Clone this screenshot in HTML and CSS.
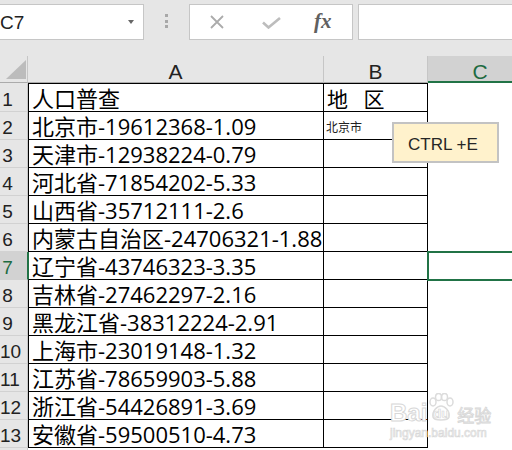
FILE: index.html
```html
<!DOCTYPE html>
<html>
<head>
<meta charset="utf-8">
<link rel="stylesheet" href="styles.css">
</head>
<body>
<div class="app">
  <div class="toolbar">
    <div class="namebox"><span class="ref">C7</span><span class="caret"></span></div>
    <div class="dots"><i></i><i></i><i></i></div>
    <div class="fbtns">
      <svg class="ic-x" width="14" height="14" viewBox="0 0 14 14"><path d="M1 1 L13 13 M13 1 L1 13" stroke="#ababab" stroke-width="1.8" fill="none"/></svg>
      <svg class="ic-ok" width="19" height="12" viewBox="0 0 19 12"><path d="M1 5.5 L6.5 10.5 L18 1" stroke="#bdbdbd" stroke-width="2.6" fill="none"/></svg>
      <span class="fx">fx</span>
    </div>
    <div class="formula"></div>
  </div>
  <div class="sheet">
    <div class="grid">
      <div class="corner"><svg width="21" height="20" viewBox="0 0 21 20"><path d="M20 0 L20 19 L0 19 Z" fill="#bcbcbc"/></svg></div>
      <div class="ch">A</div>
      <div class="ch">B</div>
      <div class="ch chsel">C</div>

      <div class="rh first">1</div><div class="ca first">人口普查</div><div class="cb first"><span class="region">地&nbsp;&nbsp;区</span></div><div class="cc"></div>
      <div class="rh">2</div><div class="ca">北京市-19612368-1.09</div><div class="cb"><span class="small">北京市</span></div><div class="cc"></div>
      <div class="rh">3</div><div class="ca">天津市-12938224-0.79</div><div class="cb"></div><div class="cc"></div>
      <div class="rh">4</div><div class="ca">河北省-71854202-5.33</div><div class="cb"></div><div class="cc"></div>
      <div class="rh">5</div><div class="ca">山西省-35712111-2.6</div><div class="cb"></div><div class="cc"></div>
      <div class="rh">6</div><div class="ca">内蒙古自治区-24706321-1.88</div><div class="cb"></div><div class="cc"></div>
      <div class="rh rsel">7</div><div class="ca asel">辽宁省-43746323-3.35</div><div class="cb"></div><div class="cc"></div>
      <div class="rh">8</div><div class="ca">吉林省-27462297-2.16</div><div class="cb"></div><div class="cc"></div>
      <div class="rh">9</div><div class="ca">黑龙江省-38312224-2.91</div><div class="cb"></div><div class="cc"></div>
      <div class="rh">10</div><div class="ca">上海市-23019148-1.32</div><div class="cb"></div><div class="cc"></div>
      <div class="rh">11</div><div class="ca">江苏省-78659903-5.88</div><div class="cb"></div><div class="cc"></div>
      <div class="rh">12</div><div class="ca">浙江省-54426891-3.69</div><div class="cb"></div><div class="cc"></div>
      <div class="rh">13</div><div class="ca">安徽省-59500510-4.73</div><div class="cb"></div><div class="cc"></div>
      <div class="rh"></div><div class="cx"></div><div class="cx"></div><div class="cc"></div>
    </div>
    <div class="selection"></div>
    <div class="tip">CTRL +E</div>
    <div class="wm">
      <div class="wm-logo">
        <span class="wm-bai">Bai</span>
        <span class="wm-paw">
          <svg width="28" height="30" viewBox="0 0 28 30">
            <g fill="none" stroke="#dcdcdc" stroke-width="1.5">
              <ellipse cx="6" cy="9" rx="3" ry="4"/>
              <ellipse cx="11.5" cy="4" rx="3" ry="3.6"/>
              <ellipse cx="17.5" cy="4" rx="3" ry="3.6"/>
              <ellipse cx="23" cy="9" rx="3" ry="4"/>
              <path d="M6 24 C5 18 10 13 14 13 C18 13 23 18 22 24 C21 28 7 28 6 24 Z"/>
            </g>
          </svg>
          <span class="wm-du">du</span>
        </span>
        <span class="wm-jy">经验</span>
      </div>
      <div class="wm-url">jingyan.baidu.com</div>
    </div>
  </div>
</div>
</body>
</html>
```
FILE: styles.css
```css
* { box-sizing: border-box; margin: 0; padding: 0; }
html, body { width: 512px; height: 450px; overflow: hidden; }
body { background: #e6e6e6; font-family: "Liberation Sans", Arial, sans-serif; color: #222; }
.app { position: relative; width: 512px; height: 450px; overflow: hidden; }

.toolbar { height: 56px; display: flex; align-items: flex-start; padding-top: 4px; }
.namebox { width: 145px; height: 36px; margin-left: -1px; background: #fff; border: 1px solid #c6c6c6; display: flex; align-items: center; justify-content: space-between; padding-right: 9px; }
.ref { font-size: 19px; margin-left: 0; color: #222; line-height: 20px; padding-top: 1px; }
.caret { width: 0; height: 0; border-left: 3.5px solid transparent; border-right: 3.5px solid transparent; border-top: 4px solid #666; margin-top: -1px; }
.dots { width: 45px; display: flex; flex-direction: column; align-items: center; padding-top: 10px; gap: 2.5px; }
.dots i { display: block; width: 3px; height: 3px; background: #a8a8a8; }
.fbtns { width: 164px; height: 36px; background: #fff; border: 1px solid #c6c6c6; display: flex; align-items: center; }
.ic-x { margin-left: 20px; }
.ic-ok { margin-left: 38px; margin-top: 2px; }
.fx { margin-left: 33px; font-family: "Liberation Serif", "Times New Roman", serif; font-style: italic; font-weight: bold; font-size: 21px; color: #606060; line-height: 20px; margin-top: -3px; }
.formula { margin-left: 5px; flex: 1; height: 36px; background: #fff; border: 1px solid #c6c6c6; border-right: none; }

.sheet { position: relative; width: 532px; }
.grid { display: grid; grid-template-columns: 28px 296px 104px 104px; grid-template-rows: 27px 29px repeat(13, 28px); background: #fff; }

.corner { background: #e6e6e6; border-right: 1px solid #c6c6c6; border-bottom: 1px solid #ababab; padding: 4px 0 0 6px; }
.corner svg { display: block; }
.ch { background: #e6e6e6; border-right: 1px solid #c6c6c6; border-bottom: 1px solid #ababab; font-size: 21px; line-height: 22px; padding-top: 5px; text-align: center; color: #222; }
.chsel { background: #d2d2d2; border-right: none; border-bottom: 2px solid #217346; color: #1d6b41; }

.rh { background: #e6e6e6; border-bottom: 1px solid #d2d2d2; border-right: 1px solid #c6c6c6; font-size: 19px; line-height: 23.5px; padding: 4px 12px 0 0; text-align: center; color: #222; white-space: nowrap; }
.rh.first { border-top: 1px solid #e6e6e6; }
.rsel { background: #d2d2d2; border-right-color: #217346; color: #1d6b41; }

.ca, .cb { border-bottom: 1px solid #000; border-right: 1px solid #000; font-family: "Open Sans", "Noto Sans CJK SC", sans-serif; font-size: 22px; line-height: 27px; padding: 1px 0 0 3px; white-space: nowrap; color: #000; }
.ca { border-left: 1px solid #000; }
.ca.first, .cb.first { border-top: 1px solid #000; }
.asel { border-left-color: #217346; }
.cb { padding-left: 3px; }
.region { font-family: "Noto Sans CJK SC", sans-serif; font-size: 21px; white-space: pre; word-spacing: 3px; }
.small { font-family: "Noto Sans CJK SC", sans-serif; font-size: 12px; line-height: 27px; display: block; padding-top: 0; margin-left: -1px; color: #222; }

.selection { position: absolute; left: 427px; top: 195px; width: 200px; height: 30px; border: 2px solid #217346; }
.tip { position: absolute; left: 392px; top: 66px; width: 107px; height: 41px; background: #fff2cc; border: 2px solid #c3c3c3; font-size: 17px; line-height: 21px; padding: 10px 0 0 14px; color: #262626; white-space: nowrap; }

.wm { position: absolute; left: 390px; top: 337px; color: #d4d4d4; }
.wm-logo { display: flex; align-items: flex-end; height: 32px; }
.wm-bai { font-family: "Liberation Sans", sans-serif; font-weight: bold; font-size: 24px; line-height: 24px; color: #fff; -webkit-text-stroke: 1px #d8d8d8; }
.wm-paw { position: relative; width: 28px; height: 32px; display: block; }
.wm-paw svg { position: absolute; left: 0; top: 0; }
.wm-du { position: absolute; left: 6px; top: 14px; font-size: 13px; font-weight: bold; color: #fff; -webkit-text-stroke: 0.7px #d8d8d8; line-height: 14px; }
.wm-jy { font-family: "Noto Sans CJK SC", sans-serif; font-size: 17px; line-height: 20px; color: #fff; -webkit-text-stroke: 0.9px #d8d8d8; margin-left: 2px; }
.wm-url { font-size: 12px; line-height: 14px; margin-top: 1px; color: #fff; -webkit-text-stroke: 0.7px #d8d8d8; }
```
